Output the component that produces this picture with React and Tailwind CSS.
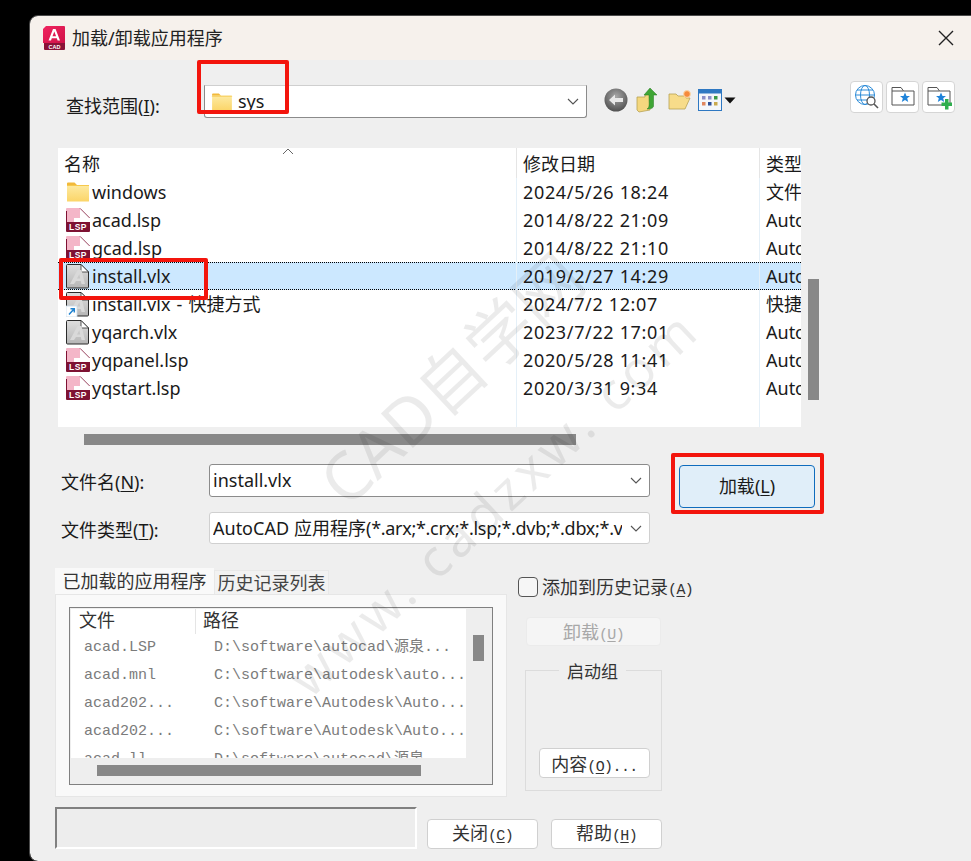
import React from "react";

const ui = "font-['Noto_Sans','Noto_Sans_CJK_SC',sans-serif]";
const mono = "font-['Liberation_Mono','Noto_Sans_CJK_SC',monospace]";

const files = [
  { name: "windows", date: "2024/5/26 18:24", type: "文件", icon: "folder" },
  { name: "acad.lsp", date: "2014/8/22 21:09", type: "Auto", icon: "lsp" },
  { name: "gcad.lsp", date: "2014/8/22 21:10", type: "Auto", icon: "lsp" },
  { name: "install.vlx", date: "2019/2/27 14:29", type: "Auto", icon: "vlx", selected: true },
  { name: "install.vlx - 快捷方式", date: "2024/7/2 12:07", type: "快捷", icon: "link" },
  { name: "yqarch.vlx", date: "2023/7/22 17:01", type: "Auto", icon: "vlx" },
  { name: "yqpanel.lsp", date: "2020/5/28 11:41", type: "Auto", icon: "lsp" },
  { name: "yqstart.lsp", date: "2020/3/31 9:34", type: "Auto", icon: "lsp" },
];

const loaded = [
  ["acad.LSP", "D:\\software\\autocad\\源泉..."],
  ["acad.mnl", "C:\\software\\autodesk\\auto..."],
  ["acad202...", "C:\\software\\Autodesk\\Auto..."],
  ["acad202...", "C:\\software\\Autodesk\\Auto..."],
  ["acad.ll", "D:\\software\\autocad\\源泉..."],
];

function AppIcon() {
  return (
    <svg width="22" height="24" viewBox="0 0 22 24" className="shrink-0">
      <defs>
        <linearGradient id="appred" x1="0" y1="0" x2="1" y2="1">
          <stop offset="0" stopColor="#f0245f" />
          <stop offset="1" stopColor="#d01248" />
        </linearGradient>
      </defs>
      <path d="M3 0H21a1 1 0 0 1 1 1V17H0V3z" fill="url(#appred)" />
      <path d="M1 17H22V23a1 1 0 0 1-1 1H2a1 1 0 0 1-1-1z" fill="#8a1237" />
      <path d="M5.5 14.5L10 3H12.6L17 14.5H14.6L13.8 12.2H8.8L8 14.5zM9.5 10.2H13.1L11.3 5.6z" fill="#fff" />
      <text x="11.5" y="22.6" fontSize="5.5" fontWeight="700" textAnchor="middle" fill="#fff" fontFamily="Liberation Sans">CAD</text>
    </svg>
  );
}

function FolderIcon({ w = 24, h = 20 }) {
  return (
    <svg width={w} height={h} viewBox="0 0 24 20" className="shrink-0">
      <defs>
        <linearGradient id="fold" x1="0" y1="0" x2="0" y2="1">
          <stop offset="0" stopColor="#fdeaa2" />
          <stop offset="1" stopColor="#fbd568" />
        </linearGradient>
      </defs>
      <path d="M1 1.5a1 1 0 0 1 1-1H8.5L11 3H1z" fill="#f2b93a" />
      <rect x="1" y="3" width="22" height="16.5" rx="0.5" fill="url(#fold)" />
      <rect x="1" y="3" width="22" height="1" fill="#f6c84d" />
    </svg>
  );
}

function LspIcon() {
  return (
    <svg width="24" height="24" viewBox="0 0 24 24" className="shrink-0">
      <path d="M1 0H14V10H8V14H0V1a1 1 0 0 1 1-1z" fill="#f4b6c8" />
      <path d="M14 0L24 10V14H8V10H14z" fill="#fff" />
      <path d="M14 0.3L23.7 10" stroke="#7e1233" strokeWidth="0.8" fill="none" />
      <path d="M0 14H24V23a1 1 0 0 1-1 1H1a1 1 0 0 1-1-1z" fill="#7e1233" />
      <path d="M0 3H1V14H0z" fill="#7e1233" />
      <text x="12" y="22.4" fontSize="8.5" fontWeight="700" textAnchor="middle" fill="#fff" letterSpacing="0.5" fontFamily="Liberation Sans">LSP</text>
    </svg>
  );
}

function VlxIcon({ link }) {
  return (
    <svg width="24" height="25" viewBox="0 0 24 25" className="shrink-0">
      <defs>
        <linearGradient id="vlx" x1="0" y1="0" x2="0" y2="1">
          <stop offset="0" stopColor="#dedede" />
          <stop offset="1" stopColor="#b6b6b6" />
        </linearGradient>
      </defs>
      <path d="M1.5 0.5H15L22.5 8V23a1 1 0 0 1-1 1H1.5a1 1 0 0 1-1-1V1.5a1 1 0 0 1 1-1z" fill="url(#vlx)" stroke="#2b2b2b" strokeWidth="1" />
      <path d="M15 0.5V8H22.5z" fill="#fff" stroke="#2b2b2b" strokeWidth="0.8" />
      <path d="M4 20L11.5 6H15.5L19 20H15.5L14.8 17H10L8 20zM11 14.5H14.2L13.4 10z" fill="#d9d9d9" />
      {link && (
        <g>
          <rect x="0" y="14" width="11" height="11" fill="#fff" stroke="#c9d9e8" strokeWidth="0.8" />
          <path d="M3 22.5L8 17M4.5 16.8H8.3V20.6" stroke="#1f82cf" strokeWidth="1.5" fill="none" />
        </g>
      )}
    </svg>
  );
}

function FileIcon({ kind }) {
  if (kind === "folder") return <FolderIcon />;
  if (kind === "lsp") return <LspIcon />;
  return <VlxIcon link={kind === "link"} />;
}

function Chevron({ className = "" }) {
  return (
    <svg width="12" height="7" viewBox="0 0 12 7" className={"shrink-0 " + className}>
      <path d="M1 1L6 6L11 1" stroke="#555" strokeWidth="1.1" fill="none" />
    </svg>
  );
}

function NavIcons() {
  return (
    <div className="ml-[17px] mt-[2px] flex items-center">
      <svg width="24" height="24" viewBox="0 0 24 24">
        <defs>
          <radialGradient id="back" cx="0.5" cy="0.35" r="0.7">
            <stop offset="0" stopColor="#a8a8a8" />
            <stop offset="1" stopColor="#4a4a4a" />
          </radialGradient>
        </defs>
        <circle cx="12" cy="12" r="11.5" fill="url(#back)" />
        <path d="M5 12L11 6.5V10H19V14H11V17.5z" fill="#e8e8e8" />
      </svg>
      <svg width="24" height="26" viewBox="0 0 24 26" className="ml-[8px]">
        <path d="M1 10H9V8L14 7V23L3 25L1 23z" fill="#f4d77e" stroke="#b8a254" strokeWidth="0.8" />
        <path d="M14 1L21 8H17.5V19C17.5 21 15 22 11 22C14 20 13 18 13 8H8z" fill="#3fa535" stroke="#22781f" strokeWidth="0.5" />
      </svg>
      <svg width="24" height="22" viewBox="0 0 24 22" className="ml-[8px]">
        <path d="M1 5H8L10 7H18V9L22 9L17 20H3L1 20z" fill="#f7dc8a" stroke="#b8a254" strokeWidth="0.8" />
        <circle cx="19" cy="5" r="3.4" fill="#f58a3c" stroke="#fcd9a8" strokeWidth="1" />
      </svg>
      <svg width="24" height="22" viewBox="0 0 24 22" className="ml-[6px]">
        <rect x="0.5" y="0.5" width="23" height="21" fill="#f4f6fa" stroke="#2e78c2" />
        <rect x="0.5" y="0.5" width="23" height="4" fill="#2e78c2" />
        <rect x="4" y="7" width="3.5" height="3.5" fill="#8b8fc7" />
        <rect x="10" y="7" width="3.5" height="3.5" fill="#8b8fc7" />
        <rect x="16" y="7" width="3.5" height="3.5" fill="#3a9a46" />
        <rect x="4" y="13" width="3.5" height="3.5" fill="#e0865f" />
        <rect x="10" y="13" width="3.5" height="3.5" fill="#2d4f97" />
        <rect x="16" y="13" width="3.5" height="3.5" fill="#c9a94e" />
      </svg>
      <svg width="12" height="7" viewBox="0 0 12 7" className="ml-[2px]">
        <path d="M0.5 0.5H11.5L6 6.5z" fill="#111" />
      </svg>
    </div>
  );
}

function WebButton() {
  return (
    <div className="flex h-[32px] w-[33px] items-center justify-center rounded-[4px] border border-[#d5d5d5] bg-white">
      <svg width="26" height="26" viewBox="0 0 26 26">
        <g fill="none" stroke="#2b8bd8" strokeWidth="1">
          <circle cx="11" cy="11" r="9.5" />
          <ellipse cx="11" cy="11" rx="4.5" ry="9.5" />
          <path d="M1.5 11H20.5M3 6H19M3 16H14" />
        </g>
        <circle cx="17" cy="17" r="4" fill="#fff" stroke="#555" strokeWidth="1.3" />
        <path d="M20 20L24 24" stroke="#555" strokeWidth="1.6" />
      </svg>
    </div>
  );
}

function StarFolderButton({ plus }) {
  return (
    <div className="flex h-[32px] w-[33px] items-center justify-center rounded-[4px] border border-[#d5d5d5] bg-white">
      <svg width="26" height="26" viewBox="0 0 26 26">
        <path d="M2 3.5H11L13.5 7H24V21H2z" fill="none" stroke="#555" strokeWidth="1" />
        <path d="M2 7H13.5" stroke="#555" strokeWidth="1" />
        <path d="M15 8.5L16.5 12H20L17.2 14.3L18.2 18L15 16L11.8 18L12.8 14.3L10 12H13.5z" fill="#1f83d9" />
        {plus && <path d="M19 15H22.5V18.5H26V22H22.5V25.5H19V22H15.5V18.5H19z" fill="#2fae4e" />}
      </svg>
    </div>
  );
}

function Shortcut({ label, k, after = "", className = "" }) {
  return (
    <span className={className}>
      {label}(<span className="underline underline-offset-2">{k}</span>){after}
    </span>
  );
}

// the lower part of the dialog prints its latin in a fixed width font
function MonoShortcut({ label, k, after = "", className = "" }) {
  return (
    <span className={"text-[18px] leading-[20px] " + className}>
      {label}
      <span className={"text-[15px] leading-[20px] tracking-[-0.6px] " + mono}>
        (<span className="underline underline-offset-2">{k}</span>){after}
      </span>
    </span>
  );
}

function FileList() {
  return (
    <div className={"h-[279px] w-[743px] overflow-hidden bg-white text-[18px] leading-[28px] text-[#1a1a1a] " + ui}>
      <div className="grid h-[30px] grid-cols-[458px_243px_42px]">
        <div className="relative pl-[6px] pt-[2px]">
          名称
          <svg width="12" height="7" viewBox="0 0 12 7" className="absolute left-[224px] top-0">
            <path d="M1 6L6 1L11 6" stroke="#666" strokeWidth="1" fill="none" />
          </svg>
        </div>
        <div className="border-l border-[#e5e5e5] pl-[6px] pt-[2px]">修改日期</div>
        <div className="overflow-hidden whitespace-nowrap border-l border-[#e5e5e5] pl-[6px] pt-[2px]">类型</div>
      </div>
      {files.map((f) => (
        <div
          key={f.name}
          className={
            "grid h-[28px] grid-cols-[458px_243px_42px] " +
            (f.selected ? "border-y border-dotted border-black bg-[#cce8ff]" : "")
          }
        >
          <div className={"flex items-center pl-[8px] " + (f.selected ? "-my-px" : "")}>
            <FileIcon kind={f.icon} />
            <span className="ml-[2px] whitespace-nowrap [word-spacing:1.5px]">{f.name}</span>
          </div>
          <div className={"border-l border-[#e5f0f8] pl-[6px] tracking-[0.65px] " + (f.selected ? "-my-px" : "")}>{f.date}</div>
          <div className={"overflow-hidden whitespace-nowrap border-l border-[#e5f0f8] pl-[6px] " + (f.selected ? "-my-px" : "")}>{f.type}</div>
        </div>
      ))}
      <div className="grid h-[25px] grid-cols-[458px_243px_42px]">
        <div />
        <div className="border-l border-[#e5f0f8]" />
        <div className="border-l border-[#e5f0f8]" />
      </div>
    </div>
  );
}

function LoadedList() {
  return (
    <div className="relative ml-[13px] mt-[12px] h-[178px] w-[424px] border border-[#808080] bg-[#eeeeee] p-px">
      <div className="flex h-[149px]">
        <div className="w-[395px] overflow-hidden bg-white">
          <div className={"flex h-[25px] text-[18px] leading-[23px] text-[#333] " + ui}>
            <div className="w-[124px] pl-[8px]">文件</div>
            <div className="border-l border-[#e5e5e5] pl-[7px]">路径</div>
          </div>
          {loaded.map((r, i) => (
            <div key={i} className={"flex h-[28px] whitespace-nowrap text-[15px] leading-[27px] text-[#7b7b7b] " + mono}>
              <div className="w-[143px] shrink-0 pl-[13px]">{r[0]}</div>
              <div className="overflow-hidden">{r[1]}</div>
            </div>
          ))}
        </div>
        <div className="pl-[7px] pt-[26px]">
          <div className="h-[26px] w-[11px] bg-[#888888]" />
        </div>
      </div>
      <div className="ml-[26px] mt-[7px] h-[11px] w-[324px] bg-[#888888]" />
    </div>
  );
}

function Button({ children, className = "" }) {
  return (
    <div className={"flex items-center justify-center rounded-[4px] border border-[#d0d0d0] bg-white text-[#333] " + className}>
      {children}
    </div>
  );
}

export default function App() {
  return (
    <div className={"h-[861px] w-[971px] overflow-hidden bg-black pl-[30px] pt-[16px] " + ui}>
      <div className="relative h-[845px] w-[941px] overflow-hidden rounded-l-[8px] bg-[#efefef] text-[#1a1a1a] outline outline-[#4a4a4a]">
        {/* title bar */}
        <div className="flex h-[44px] items-center bg-[#f6f1ec] pl-[13px]">
          <AppIcon />
          <span className="ml-[7px] text-[18px] text-[#222]">加载/卸载应用程序</span>
          <svg width="16" height="16" viewBox="0 0 16 16" className="ml-[715px]">
            <path d="M1 1L15 15M15 1L1 15" stroke="#222" strokeWidth="1.4" />
          </svg>
        </div>

        {/* look in row */}
        <div className="flex h-[88px] pl-[36px]">
          <div className="mt-[32px] w-[138px] text-[18px] leading-[28px]">
            <Shortcut label="查找范围" k="I" after=":" />
          </div>
          <div className="mt-[25px] flex h-[33px] w-[383px] items-center rounded-b-[3px] border border-[#8b8b8b] border-t-[#cfcfcf] bg-white pl-[6px] pr-[7px] text-[18px]">
            <FolderIcon w={22} h={18} />
            <span className="ml-[5px] flex-1">sys</span>
            <Chevron />
          </div>
          <div className="mt-[25px]">
            <NavIcons />
          </div>
          <div className="ml-[114px] mt-[21px] flex gap-[3px]">
            <WebButton />
            <StarFolderButton />
            <StarFolderButton plus />
          </div>
        </div>

        {/* file list */}
        <div className="flex pl-[28px]">
          <FileList />
          <div className="ml-[7px] mt-[131px] h-[121px] w-[11px] bg-[#888888]" />
        </div>
        <div className="ml-[54px] mt-[7px] h-[11px] w-[492px] bg-[#888888]" />

        {/* name and type */}
        <div className="mt-[19px] flex pl-[31px]">
          <div className="w-[589px]">
            <div className="flex items-center">
              <div className="w-[148px] pt-[4px] text-[18px]">
                <Shortcut label="文件名" k="N" after=":" />
              </div>
              <div className="flex h-[33px] w-[441px] items-center rounded-[3px] border border-[#8b8b8b] bg-white pl-[3px] pr-[7px] text-[18px]">
                <span className="flex-1">install.vlx</span>
                <Chevron />
              </div>
            </div>
            <div className="mt-[15px] flex items-center">
              <div className="w-[148px] pt-[4px] text-[18px]">
                <Shortcut label="文件类型" k="T" after=":" />
              </div>
              <div className="flex h-[32px] w-[441px] items-center rounded-[3px] border border-[#d0d0d0] bg-white pl-[3px] pr-[7px] text-[18px]">
                <span className="flex-1 overflow-hidden whitespace-nowrap">
                  AutoCAD<span className="ml-[5px]">应用程序</span>
                  <span className="tracking-[-0.3px]">(*.arx;*.crx;*.lsp;*.dvb;*.dbx;*.v</span>
                </span>
                <Chevron className="ml-[8px]" />
              </div>
            </div>
          </div>
          <div className="ml-[29px] mt-px flex h-[43px] w-[136px] items-center justify-center rounded-[4px] border border-[#0f6cbd] bg-[#e0eef9] text-[18px]">
            <Shortcut label="加载" k="L" />
          </div>
        </div>

        {/* loaded apps and side controls */}
        <div className="mt-[24px] flex pl-[25px]">
          <div className="w-[452px]">
            <div className="flex items-end text-[18px] leading-[24px]">
              <div className="flex h-[26px] w-[159px] items-center justify-center bg-[#f9f9f9] text-[#333]">已加载的应用程序</div>
              <div className="flex h-[24px] w-[115px] items-center justify-center border border-b-0 border-[#e8e8e8] bg-[#f2f2f2] text-[#444]">历史记录列表</div>
            </div>
            <div className="h-[203px] overflow-hidden border border-[#e6e6e6] bg-[#f9f9f9]">
              <LoadedList />
            </div>
          </div>
          <div className="ml-[11px] pt-[9px]">
            <label className="flex h-[20px] items-center text-[#333]">
              <span className="h-[20px] w-[20px] rounded-[4px] border border-[#555] bg-[#f6f6f6]" />
              <MonoShortcut label="添加到历史记录" k="A" className="ml-[4px] pt-[4px]" />
            </label>
            <div className="ml-[8px] mt-[20px] flex h-[29px] w-[135px] items-center justify-center rounded-[4px] border border-[#ebebeb] bg-[#f5f5f5] pt-[4px] text-[#a8a8a8]">
              <MonoShortcut label="卸载" k="U" />
            </div>
            <div className="relative ml-[7px] mt-[24px] h-[121px] w-[137px] border border-[#dcdcdc]">
              <span className="absolute left-[33px] top-[-10px] bg-[#efefef] px-[8px] text-[17px] leading-[22px] text-[#333]">启动组</span>
              <div className="ml-[13px] mt-[77px]">
                <Button className="h-[30px] w-[111px] pt-[5px]">
                  <MonoShortcut label="内容" k="O" after="..." />
                </Button>
              </div>
            </div>
          </div>
        </div>

        {/* status and close */}
        <div className="mt-[10px] flex items-end pl-[25px]">
          <div className="h-[42px] w-[362px] border-2 border-[#808080] border-b-white border-r-white bg-[#ededed]" />
          <Button className="ml-[10px] h-[30px] w-[111px] pt-[2px]">
            <MonoShortcut label="关闭" k="C" />
          </Button>
          <Button className="ml-[13px] h-[30px] w-[111px] pt-[2px]">
            <MonoShortcut label="帮助" k="H" />
          </Button>
        </div>

        {/* annotation boxes */}
        <div className="pointer-events-none absolute left-[167px] top-[44px] h-[54px] w-[92px] rounded-[2px] border-[4px] border-[#f3150d]" />
        <div className="pointer-events-none absolute left-[29px] top-[242px] h-[42px] w-[149px] rounded-[2px] border-[4px] border-[#f3150d]" />
        <div className="pointer-events-none absolute left-[641px] top-[437px] h-[61px] w-[153px] rounded-[2px] border-[4px] border-[#f3150d]" />

        {/* watermark */}
        <div className="pointer-events-none absolute left-[250px] top-[327px] w-[340px] -rotate-[43deg] whitespace-nowrap text-center text-[66px] leading-[70px] text-black/[0.08]">
          CAD自学网
        </div>
        <div className="pointer-events-none absolute left-[183px] top-[456px] w-[560px] -rotate-[43deg] whitespace-nowrap text-center text-[52px] leading-[60px] tracking-[5px] text-black/[0.08]">
          www. cadzxw. com
        </div>
      </div>
    </div>
  );
}
